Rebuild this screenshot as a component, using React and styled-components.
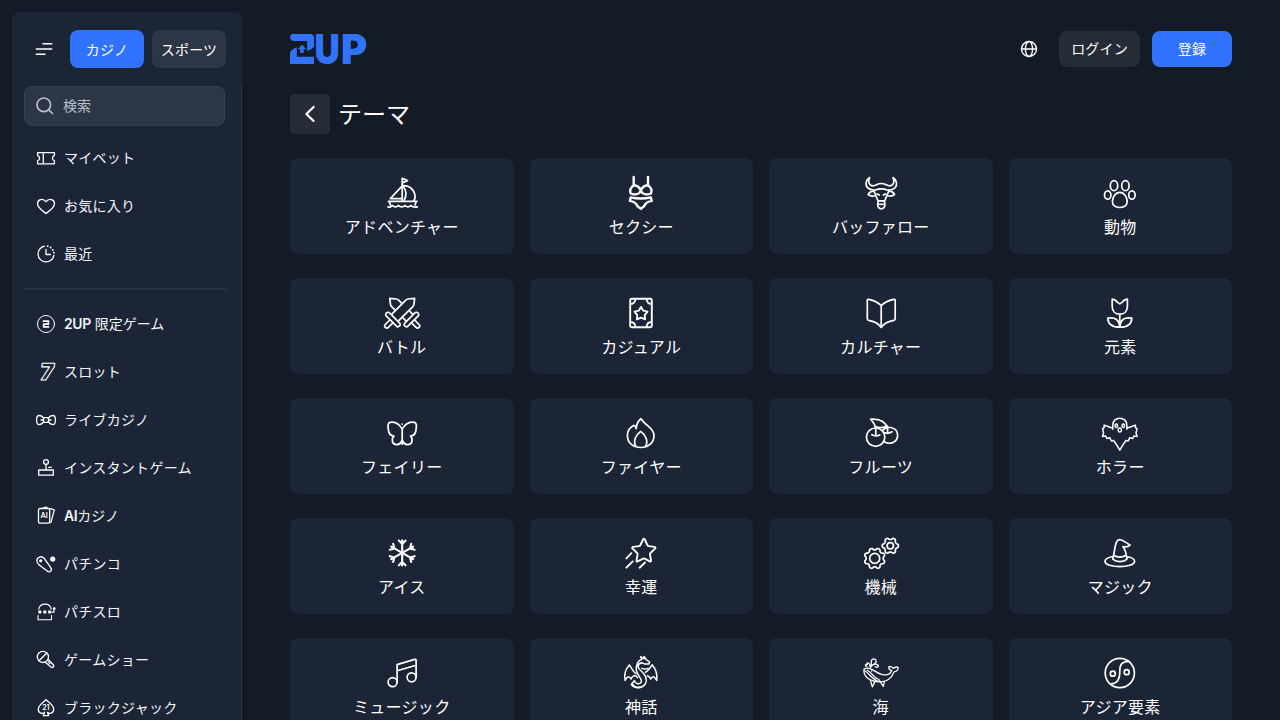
import React from "react";
import styled, { createGlobalStyle } from "styled-components";

const GlobalStyle = createGlobalStyle`
  *, *::before, *::after { box-sizing: border-box; }
  html, body { margin: 0; padding: 0; height: 100%; overflow: hidden; background: #131b27; }
  body, button {
    font-family: Inter, "Noto Sans CJK JP", sans-serif;
    color: #fff;
  }
  button { border: 0; padding: 0; cursor: pointer; }
`;

const Page = styled.div`
  display: flex;
  height: 720px;
  width: 1280px;
  overflow: hidden;
  padding: 12px 48px 0 12px;
  background: #131b27;
`;

const Sidebar = styled.aside`
  flex: 0 0 230px;
  height: 708px;
  overflow: hidden;
  border-radius: 8px 8px 0 0;
  background: #1b2536;
`;

const SidebarTop = styled.div`
  display: flex;
  align-items: center;
  gap: 8px;
  height: 72px;
  padding: 2px 16px 0 14px;
`;

const MenuButton = styled.button`
  display: grid;
  place-items: center;
  width: 36px;
  height: 36px;
  background: none;
`;

const Tab = styled.button`
  width: 74px;
  height: 38px;
  padding-top: 1px;
  border-radius: 8px;
  font-size: 14px;
  line-height: 20px;
  letter-spacing: 0.015em;
  white-space: nowrap;
  background: ${(p) => (p.$active ? "#3173fe" : "#2c3645")};
`;

const SidebarBody = styled.div`
  height: 660px;
  padding: 2px 15px 0 12px;
  border-right: 1px solid #2a3443;
`;

const SearchBox = styled.label`
  display: flex;
  align-items: center;
  gap: 8px;
  width: 201px;
  height: 40px;
  padding: 0 10px;
  border: 1px solid #374150;
  border-radius: 8px;
  background: #2c3645;
  color: #b9c0ca;
  font-size: 14px;
  line-height: 20px;
`;

const NavList = styled.nav`
  display: flex;
  flex-direction: column;
  padding: ${(p) => (p.$first ? "8px 0 10px" : "10px 0 0")};
`;

const NavItem = styled.a`
  display: flex;
  flex: 0 0 48px;
  align-items: center;
  gap: 8px;
  padding-left: 12px;
  color: #f3f6fa;
`;

const NavLabel = styled.span`
  font-size: 14px;
  line-height: 20px;
  letter-spacing: ${(p) => (p.$latin ? "0" : "0.02em")};
  white-space: nowrap;
`;

const Latin = styled.span`
  font-weight: 600;
  letter-spacing: -0.03em;
`;

const NavDivider = styled.hr`
  width: 202px;
  height: 2px;
  margin: 0;
  border: 0;
  background: #263142;
`;

const Main = styled.main`
  flex: 1;
  min-width: 0;
  padding-left: 48px;
`;

const Header = styled.header`
  display: flex;
  align-items: center;
  height: 72px;
  padding-top: 2px;
`;

const HeaderActions = styled.div`
  display: flex;
  align-items: center;
  gap: 12px;
  margin-left: auto;
`;

const GlobeButton = styled.button`
  display: grid;
  place-items: center;
  width: 36px;
  height: 36px;
  background: none;
`;

const AuthButton = styled.button`
  width: ${(p) => (p.$primary ? 80 : 81)}px;
  height: 36px;
  border-radius: 8px;
  font-size: 14px;
  line-height: 20px;
  letter-spacing: 0.01em;
  background: ${(p) => (p.$primary ? "#3173fe" : "#252c37")};
`;

const TitleRow = styled.div`
  display: flex;
  align-items: center;
  gap: 8px;
  height: 40px;
  margin: 10px 0 24px;
`;

const BackButton = styled.button`
  display: grid;
  place-items: center;
  width: 40px;
  height: 40px;
  border-radius: 4px;
  background: #262c37;
`;

const Title = styled.h1`
  margin: 0;
  padding-top: 2px;
  font-size: 24px;
  font-weight: 400;
  line-height: 32px;
`;

const ThemeGrid = styled.div`
  display: grid;
  grid-template-columns: repeat(4, 1fr);
  grid-auto-rows: 96px;
  gap: 24px 16px;
`;

const ThemeCard = styled.a`
  display: flex;
  flex-direction: column;
  align-items: center;
  padding: 16px 0 0;
  border-radius: 8px;
  background: #1b2536;
`;

const ThemeLabel = styled.span`
  padding-top: 1px;
  font-size: 16px;
  line-height: 24px;
  letter-spacing: 0.018em;
  white-space: nowrap;
`;

const Drawing = styled.svg`
  display: block;
  flex: none;
  overflow: visible;
  fill: none;
  stroke: ${(p) => p.$color || "#fff"};
  stroke-width: ${(p) => p.$weight || 1.7};
  stroke-linecap: round;
  stroke-linejoin: round;
`;

const Solid = styled.g`
  fill: #fff;
  stroke: none;
`;

const IconText = styled.text`
  fill: #fff;
  stroke: none;
  font-family: Inter, sans-serif;
  font-weight: 600;
  text-anchor: middle;
`;

const SevenText = styled.text`
  fill: none;
  stroke: #fff;
  stroke-width: 1.1;
  font-family: Inter, sans-serif;
  font-weight: 900;
`;

const LogoText = styled.text`
  fill: #3173fe;
  stroke: none;
  font-family: Inter, sans-serif;
  font-weight: 900;
  font-size: 41.2px;
`;

function gear(cx, cy, r, depth, teeth, turn = 0) {
  const points = [];
  for (let i = 0; i < 96; i += 1) {
    const a = (i / 96) * Math.PI * 2;
    const wave = Math.tanh(1.5 * Math.cos(teeth * (a - turn)));
    const d = r + depth * wave;
    points.push(`${(cx + d * Math.cos(a)).toFixed(2)} ${(cy + d * Math.sin(a)).toFixed(2)}`);
  }
  return `M${points.join("L")}Z`;
}

function star(cx, cy, outer, inner) {
  const points = [];
  for (let i = 0; i < 10; i += 1) {
    const a = -Math.PI / 2 + (i * Math.PI) / 5;
    const d = i % 2 ? inner : outer;
    points.push(`${(cx + d * Math.cos(a)).toFixed(2)} ${(cy + d * Math.sin(a)).toFixed(2)}`);
  }
  return `M${points.join("L")}Z`;
}

const Sword = () => (
  <>
    <path d="M32.6 4.4 26 5Q24.7 5.2 23.8 6.2L8.8 21.2 15.4 27.8 30.8 12.6Q31.8 11.6 32 10.2Z" fill="#1b2536" />
    <path d="M4.2 19.2Q6 17.3 7.8 19.2L17.4 28.8Q19.2 30.7 17.4 32.2 15.8 33.5 14.2 31.8L4.4 22.2Q3 20.7 4.2 19.2Z" fill="#1b2536" />
    <path d="m8 25.8-4.7 4.7Q1.8 32 3.3 33.3 5 34.8 6.4 33.3L11.1 28.6" />
  </>
);

const themes = [
  ["アドベンチャー", <>
    <path d="M20.2 27V4.4l5.3 2.2-5.3 2.3M20 12.2 8.3 24.6H20M21 11.6C29 11.4 33.6 17.6 33 24.4L31.6 27M21.4 12.6c2.9 4 3.1 9.2.9 13.6" />
    <path d="M6.4 27.3H35M7.3 27.6l1.2 3.4M34.2 27.6l-1.2 3.4M6 32.9c2 .5 3.4-.2 4.5-1.4 1.7 1.9 4.3 1.9 6 0 1.7 1.9 4.7 1.9 6.4 0 1.7 1.9 4.3 1.9 6 0 1.1 1.2 3.2 1.9 6.4 1.4" /></>],
  ["セクシー", <g strokeWidth="2.4">
    <path d="M12.7 3v8.5M27 3v8.5M12.7 11.3c-3 2.2-4.3 5-3 8.2 4.3 1.8 8.4.8 10.1-2.3 1.8 3.1 5.9 4.1 10.2 2.3 1.3-3.2 0-6-3-8.2-4 .2-5.9 1.8-7.2 5.3-1.2-3.5-3.1-5.1-7.1-5.3Z" />
    <path d="M9.8 23.4q10 2.3 20.1 0l.8 3.5c-3.5.4-6.4 2.3-7.8 5.5L19.8 34.8l-3.1-2.4c-1.4-3.2-4.3-5.1-7.8-5.5Z" /></g>],
  ["バッファロー", <>
    <path d="M8.6 3.6C4.6 6 4 11 6.5 13.7c2.1 2.3 4.3 2.8 8.2 2.3 3-1.5 8.2-1.5 11.2 0 3.9.5 6.1 0 8.2-2.3 2.5-2.7 1.9-7.7-2.1-10.1 1.9 4 .5 8.2-3.4 8.2-3.2 0-4-2.3-8.3-2.3s-5.1 2.3-8.3 2.3c-3.9 0-5.3-4.2-3.4-8.2Z" />
    <path d="M12.8 17.2c-1.9-.2-4 .5-5.7 3.3 2.2 1.8 4.6 1.8 6.8 1.2M27.9 17.2c1.9-.2 4 .5 5.7 3.3-2.2 1.8-4.6 1.8-6.8 1.2M12.8 16.7l4.2 10.2M27.9 16.7l-4.2 10.2M17.3 26.8h6l.7 3.5q-.4 4.2-3.7 4.5-3.3-.3-3.7-4.5ZM16.8 29.4q3.5 2 7 0M16.2 19.9l2.1 1.1M24.5 19.9l-2.1 1.1" />
  </>],
  ["動物", <><ellipse cx="14" cy="11.7" rx="3.7" ry="5" /><ellipse cx="25.4" cy="11.7" rx="3.7" ry="5" /><ellipse cx="7.7" cy="21" rx="3.2" ry="4.2" /><ellipse cx="31.9" cy="21" rx="3.2" ry="4.2" /><path d="M19.8 18.3c4.5 0 7.4 5.1 7.4 9.3s-3.7 5.9-7.4 5.9-7.4-1.7-7.4-5.9 2.9-9.3 7.4-9.3Z" /></>],
  ["バトル", <><g transform="matrix(-1 0 0 1 40.4 0)"><Sword /></g><Sword /></>],
  ["カジュアル", <g strokeWidth="1.9"><rect x="9.2" y="4.8" width="21.6" height="28.5" rx="1.5" /><path d={star(20, 19.8, 6.9, 3.9)} /><path d="M14.5 5q-.4 4.8-5 5M25.5 5q.4 4.8 5 5M9.5 28q4.6.2 5 5M30.5 28q-4.6.2-5 5" /></g>],
  ["カルチャー", <path d="M20.2 11.6V33.4C17.5 29.7 12.6 27.2 7.7 26.4Q6.3 26.1 6.3 24.8V6.5Q6.3 5.1 7.8 5.3C12.7 6.2 17 8.2 20.2 11.6ZM20.2 11.6C23.4 8.2 27.7 6.2 32.6 5.3Q34.2 5.1 34.2 6.5V24.8Q34.2 26.1 32.8 26.4C27.9 27.2 23 29.7 20.2 33.4" />],
  ["元素", <path d="M12.2 5.2q4 .8 5 2.9l2.6 1.8 2.6-1.8q1-2.1 5-2.9v7.2c0 4.8-3.3 7.7-7.6 7.7s-7.6-2.9-7.6-7.7ZM19.8 20v13.2M19.8 33.2C11.7 33.2 8 30.4 7.8 24.2c7.2-1.4 11.2 1.3 12 9ZM19.8 33.2c8.1 0 11.8-2.8 12-9-7.2-1.4-11.2 1.3-12 9Z" />],
  ["フェイリー", <><path d="M20.2 15.2C16.6 8.5 12 7.6 8.2 8.3 5.6 8.8 5.9 10.6 6.1 13.4c.2 5 1.2 8.6 5.8 8.7-2 1.7-2.3 7 .8 8 3.8 1.3 6.3-.7 7.5-4.2 1.2 3.5 3.7 5.5 7.5 4.2 3.1-1 2.8-6.3.8-8 4.6-.1 5.6-3.7 5.8-8.7.2-2.8.5-4.6-2.1-5.1-3.8-.7-8.4.2-12 6.9ZM20.2 15.2v15" /><path d="M20.2 10v.1" /></>],
  ["ファイヤー", <><path d="M20 4.7C16.4 7.2 15.4 10.4 15.2 14.6 15 12.6 14.2 11.6 12.6 11.4 9.1 13.2 6.4 17 6.4 21.4c0 7.8 5.9 12.1 13.5 12.1S33 28.8 33 21.2C33 13.7 24 11.4 20 4.7Z" /><path d="M14.8 32.1c-3.2-5.3.5-11.4 4.9-14.7 4.4 3.3 8.1 9.4 4.9 14.7" /></>],
  ["フルーツ", <><circle cx="14.6" cy="23.2" r="9.2" /><path d="M21.4 16.6c4.8-5.6 15.2-3.4 15.2 4.6 0 7-7.8 10.2-13.7 6.3M14.8 22V15C14.7 10.8 12.2 8.2 9.7 5.2 18.8 4.5 24.3 6.7 26.6 14.5v4M14 12.6q7.2 2.4 12.4-.8M10.8 20.8q4 2 8 .2M23 18.5q4 2.1 8-.7" /></>],
  ["ホラー", <g strokeWidth="1.5"><path d="M12.8 15.2V11.1c0-9.2 14-9.2 14 0v4.1M12.8 14C9.6 13.9 7.7 12.1 4.1 11.1c.9 1.8-.2 2.9-1.6 3.7l1.1 4.1-1.1 3.5 3.2-.4 1.2 2.5 2.9-.8 1.6 3.3 2.2-.5 3.2 4.7 3 4.9 3-4.9 3.2-4.7 2.2.5 1.6-3.3 2.9.8 1.2-2.5 3.2.4-1.1-3.5 1.1-4.1c-1.4-.8-2.5-1.9-1.6-3.7-3.6 1-5.5 2.8-8.7 2.9" /><ellipse cx="16.3" cy="11.7" rx="1.2" ry="1.7" /><ellipse cx="23.3" cy="11.7" rx="1.2" ry="1.7" /><ellipse cx="19.8" cy="16" rx="1.6" ry="2" /></g>],
  ["アイス", <g transform="translate(20.2 18.9)" strokeWidth="2.1">{[0, 60, 120, 180, 240, 300].map((r) => <path key={r} transform={`rotate(${r})`} d="M0 0v-12.6M-3.4-12.4 0-9 3.4-12.4" />)}</g>],
  ["幸運", <g strokeWidth="1.9"><path d="M22 5.5Q22.9 4 23.8 5.5L26.4 11.2Q26.7 12 27.5 12.1L33.4 12.9Q35.2 13.3 34 14.6L29.5 19Q28.9 19.6 29 20.4L30 26.4Q30.2 28.2 28.6 27.4L23.7 24.7Q22.9 24.3 22.1 24.7L16.8 27.4Q15.2 28.1 15.5 26.4L16.6 20.5Q16.7 19.6 16.1 19L11.6 14.6Q10.5 13.2 12.2 12.9L18.2 12.1Q19.1 12 19.4 11.2Z" /><path d="m10.4 19.2-5 5.2M11.7 27.4l-6.3 6.3M24 28.5l-5.4 5.2" /></g>],
  ["機械", <><path d={gear(13.7, 24.4, 9.5, 1.1, 8, Math.PI / 8)} /><circle cx="13.7" cy="24.4" r="5" /><path d={gear(29.3, 11.8, 7.2, 1, 6, 0)} /><circle cx="29.3" cy="11.8" r="3.2" /></>],
  ["マジック", <path d="M13 22.5C7.8 23.4 5 24.9 5 27.2c0 7.2 29.6 7.2 29.6 0 0-2.3-2.8-3.8-8-4.7M12.8 25.2c1.8-7.6 2-13.7 3.8-17.4 1-2.3 2.5-2.8 4.8-1.8 2.6 1 5.3 2.8 8.7 5.2-1.8 1.8-4.4 1.9-7.1 1.5 2.8 3.2 3.4 8.3 4 12.5-3.4 3.2-10.8 3.2-14.2 0ZM13.4 21.2q6.3 3.8 12.9 0" />],
  ["ミュージック", <><circle cx="10.6" cy="28.2" r="4.5" /><circle cx="29.6" cy="23.3" r="4.5" /><path d="M15.1 28V10.6L32.7 5.4Q34.1 5 34.1 6.4V23.2M15.1 16.8 34.1 11.2" /></>],
  ["神話", <g strokeWidth="1.5"><path d="M20.8 5.4 19.6 2.6l3.2 2 .2-2.1 2.1 3 3.6 2.6-1 2-4.3-.2-2.7-1.1c-4.2 1.1-4.7 4.5-1.5 7.2 5.6 4.9 8 9.4 5 14-3.4 5-11 4.6-14 .5l3.2-4c.7 3.2 5 4.5 6.8 1.7 2.2-3.5-7.6-8.6-4.5-16.6Q17 6 20.8 5.4Z" /><path d="M8.3 11C4.3 15.5 2.8 20.3 4.1 26.4c2.4-4.3 4-4.8 6-1.4 1.4-4.2 4.3-4.3 6.5-1.4M8.3 11c1.8 2.2 3.6 6.8 6.8 8.6M31.2 10.7c4 4.8 5.5 9.6 4.5 15.7-2.4-4.3-4-4.8-6-1.4-.8-2.2-1.8-3.2-3.4-3.1M31.2 10.7c-1.6 2.7-3.6 6.4-6.8 7.5M21 14.4q2.4 1.4 6 0M11.2 29.6q2.6 4.6 8 3.6" /></g>],
  ["海", <g strokeWidth="1.3"><path d="M3 15.1c5.8-3.2 9.7 2.2 16.7 5.1 4.7 1.6 9.5.5 11-3.5-2.4-1-3.8-2.2-2.5-4.4 1.8.5 3.5.9 4.3 2.2 1.4-1.7 3.1-1.8 4.8-1-.4 3-2.2 4.2-4.3 4.4-2.3 6.4-7.9 9.9-14.2 9.9C9 27.8 2 22.8 3 15.1Z" /><path d="M3.8 16.8c4.4 2.6 7.3 8.2 13.2 10.6M6.4 16.3c4.6 2.7 5.9 6.4 9.8 8.6M10.6 17v.2M9.4 26.4l1.9 6.5 2.5-5M17.5 25l4.8 7.4 1.1-5.2M5.8 12.4c-2.4-.7-1.3-2.4.5-1.8-.9-2.2 1.6-2.5 2.6.4l.2 2M10 12.8c1-3.2-1.2-7.9 2.8-8 2.2 0 3.2 2.2 1.7 4.3-1.3 1.8-4.4 1.2-4.5 3.7 1.4-2.6 4.8-3.5 6.8-1.8 1.8 1.7-.5 2.7-2.6 1.8" /></g>],
  ["アジア要素", <><circle cx="19.8" cy="19" r="14.6" /><path d="M29 7.4C22.3 7.4 19.7 10.3 19.8 17.1c.2 8.4-2.4 12.7-9.1 13" /><circle cx="12.8" cy="19.7" r="2.5" /><circle cx="26.7" cy="18.2" r="2.5" /></>],
];

const personalNav = [
  ["", "マイベット", <path d="M1.6 4.6H18.4V7.6C15.8 8.2 15.8 12.2 18.4 12.8V15.8H1.6V12.8C4.2 12.2 4.2 8.2 1.6 7.6ZM7.3 5V15.5" />],
  ["", "お気に入り", <path d="M10 17.5C6.8 15 1.5 11.8 1.5 7.5 1.5 3.3 7 1.8 10 5.7 13 1.8 18.5 3.3 18.5 7.5 18.5 11.8 13.2 15 10 17.5Z" />],
  ["", "最近", <><path d="M8.5 2.1A8 8 0 1 0 17.9 11.5M10 5.3V10.5H14.5" /><path d="M11.7 2.1v.1M14.6 3.5v.1M16.8 5.8v.1M17.9 8.6v.1" strokeWidth="1.8" /></>],
];

const gameNav = [
  ["2UP", " 限定ゲーム", <><circle cx="10" cy="10" r="8.5" strokeWidth="1" /><path strokeWidth="1.7" strokeLinecap="butt" strokeLinejoin="miter" d="M6.8 7.2H12.4V10.1H7.7V12.9H13.2" /></>],
  ["", "スロット", <SevenText transform="translate(3.2 18.2) skewX(-8) scale(1 1)" fontSize="23">7</SevenText>],
  ["", "ライブカジノ", <><rect x="7.6" y="7.6" width="4.8" height="4.8" rx="1" /><path d="M7.6 8.3C6.5 6.4 4.8 5.5 3 5.5 1.5 5.5.6 7.3.6 10s.9 4.7 2.4 4.7c1.8 0 3.5-1.1 4.6-3M12.4 8.3C13.5 6.4 15.2 5.5 17 5.5c1.5 0 2.4 1.8 2.4 4.5s-.9 4.7-2.4 4.7c-1.8 0-3.5-1.1-4.6-3M5 10h2.4M12.6 10H15" /></>],
  ["", "インスタントゲーム", <><circle cx="10" cy="4" r="2.4" /><path d="M10 6.5V12M2.7 12H17.3V17.2H2.7ZM12.7 9.3h2.6" /></>],
  ["AI", "カジノ", <><rect x="2.5" y="2.5" width="11.2" height="14.7" rx="1.4" /><path d="M7.3 1.8 10.6 1.1 11 2.3M13.4 2.4 18.3 3.9 14.9 16.6" /><IconText x="8.1" y="12.4" fontSize="7.3">AI</IconText></>],
  ["", "パチンコ", <><path d="M.9 7C.5 3 5.6 1.2 8.4 4.6L14.6 13.3C16.8 16.4 13.6 19.2 11.2 17.1L3.2 10.9Q1.1 9.4.9 7Z" /><Solid><circle cx="4.7" cy="6.8" r="1.6" /><circle cx="16.7" cy="5" r="2.6" /></Solid></>],
  ["", "パチスロ", <><path d="M2.8 7.2C3.7.4 14.3.4 15.2 7.2M2 13.5V17.7H15.5V13.5M15.7 10.1H18V6.6" strokeWidth="1.1" /><Solid><circle cx="3.8" cy="10" r="1.7" /><circle cx="8.8" cy="10" r="1.7" /><circle cx="13.6" cy="10" r="1.7" /><circle cx="18.2" cy="6.6" r="1.4" /></Solid></>],
  ["", "ゲームショー", <><circle cx="6.9" cy="6.9" r="5.6" /><path d="M3 10.8 10.8 3M12 9.2l5.5 5.8c1.1 1.3-.8 3.2-2.2 2.2L9 12M12.2 11.9l1.6 1.7" /></>],
  ["", "ブラックジャック", <><path d="M10 1.6C7.9 4 2.3 6.7 2.3 11.3c0 4 4.3 5 6.2 3L7.3 17.7h5.4l-1.2-3.4c1.9 2 6.2 1 6.2-3C17.7 6.7 12.1 4 10 1.6Z" /><IconText x="9.9" y="11.7" fontSize="7">21</IconText></>],
];

function Navigation({ items, first }) {
  return (
    <NavList $first={first}>
      {items.map(([latin, label, icon]) => (
        <NavItem key={label}>
          <Drawing $weight={1.3} width="20" height="20" viewBox="0 0 20 20">{icon}</Drawing>
          <NavLabel $latin={Boolean(latin)}>
            {latin && <Latin>{latin}</Latin>}
            {label}
          </NavLabel>
        </NavItem>
      ))}
    </NavList>
  );
}

function Logo() {
  return (
    <Drawing width="78" height="30" viewBox="0 0 78 30" aria-label="2UP">
      <g fill="#3173fe" stroke="none">
        <path d="M2.8 0H20.5Q24 .4 24 4V11.6Q24 15 17.2 17V7H4.4Q.8 6.8 0 3.5Q.2.4 2.8 0Z" />
        <path d="M0 30V19.2Q.4 15.3 6.8 13.4V22.8H24V30Z" />
        <path d="m12 10.8 4.3 4.4h-2.7v3.7h-3.4v-3.7H7.7Z" />
      </g>
      <LogoText transform="translate(24.4 29.8) scale(.85 .99)">U</LogoText>
      <LogoText transform="translate(50.9 30) scale(.97 1)">P</LogoText>
    </Drawing>
  );
}

export default function App() {
  return (
    <>
      <GlobalStyle />
      <Page>
        <Sidebar>
          <SidebarTop>
            <MenuButton>
              <Drawing $weight={1.5} width="18" height="14" viewBox="0 0 18 14"><path d="M8 1.7h8.7M1.3 7h15.4M1.3 12.3H10" /></Drawing>
            </MenuButton>
            <Tab $active>カジノ</Tab>
            <Tab>スポーツ</Tab>
          </SidebarTop>
          <SidebarBody>
            <SearchBox>
              <Drawing $weight={1.7} $color="#b9c0ca" width="20" height="20" viewBox="0 0 20 20"><circle cx="8.8" cy="8.8" r="6.8" /><path d="m13.8 13.8 3.7 3.7" /></Drawing>
              検索
            </SearchBox>
            <Navigation items={personalNav} first />
            <NavDivider />
            <Navigation items={gameNav} />
          </SidebarBody>
        </Sidebar>
        <Main>
          <Header>
            <Logo />
            <HeaderActions>
              <GlobeButton>
                <Drawing $weight={1.4} width="18" height="18" viewBox="0 0 18 18"><circle cx="9" cy="9" r="7.5" /><ellipse cx="9" cy="9" rx="3.6" ry="7.5" /><path d="M1.5 9h15" /></Drawing>
              </GlobeButton>
              <AuthButton>ログイン</AuthButton>
              <AuthButton $primary>登録</AuthButton>
            </HeaderActions>
          </Header>
          <TitleRow>
            <BackButton>
              <Drawing $weight={2.2} width="20" height="20" viewBox="0 0 20 20"><path d="m13.6 3-7.2 7 7.2 7" /></Drawing>
            </BackButton>
            <Title>テーマ</Title>
          </TitleRow>
          <ThemeGrid>
            {themes.map(([label, icon]) => (
              <ThemeCard key={label}>
                <Drawing width="40" height="40" viewBox="0 0 40 40">{icon}</Drawing>
                <ThemeLabel>{label}</ThemeLabel>
              </ThemeCard>
            ))}
          </ThemeGrid>
        </Main>
      </Page>
    </>
  );
}
